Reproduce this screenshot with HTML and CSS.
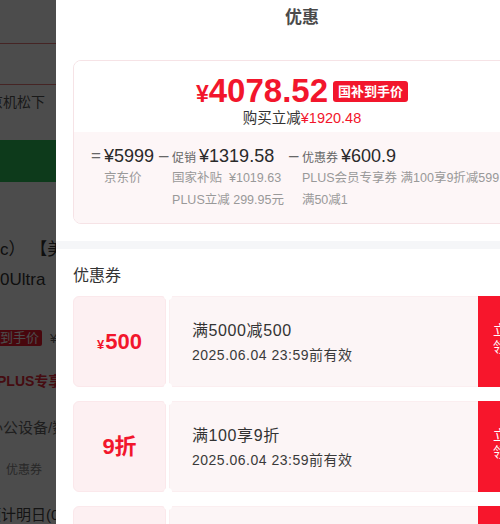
FILE: index.html
```html
<!DOCTYPE html>
<html lang="zh-CN">
<head>
<meta charset="utf-8">
<title>优惠</title>
<link rel="stylesheet" href="styles.css">
</head>
<body>
<div class="page">
  <div class="pg-top"></div>
  <div class="pg-tabs"></div>
  <div class="pg-notice"><span class="shift-10">东京机松下</span></div>
  <div class="pg-green"></div>
  <div class="pg-title">
    <div>c） 【美</div>
    <div>0Ultra</div>
  </div>
  <div class="pg-badge-row"><span class="pg-badge">到手价</span><span class="pg-yen">¥</span></div>
  <div class="pg-plus"><span class="shift-3">PLUS专享</span></div>
  <div class="pg-cat"><span class="shift-12">办公设备/数</span></div>
  <div class="pg-small"><span class="shift-n6">优惠券</span></div>
  <div class="pg-cat pg-ship"><span class="shift-14">预计明日(0</span></div>
</div>
<div class="mask"></div>

<section class="sheet">
  <header class="sheet-head">优惠</header>

  <div class="summary-wrap">
    <div class="summary">
      <div class="summary-main">
        <div class="price-line">
          <span class="price-yen">¥</span><span class="price-num">4078.52</span><span class="price-tag">国补到手价</span>
        </div>
        <div class="price-sub">购买立减<span class="red">¥1920.48</span></div>
      </div>
      <div class="summary-calc">
        <div class="calc-col">
          <span class="op">=</span>
          <div class="calc-body">
            <div class="calc-main"><span class="amt">¥5999</span></div>
            <div class="calc-note">京东价</div>
          </div>
        </div>
        <div class="calc-col">
          <span class="op">–</span>
          <div class="calc-body">
            <div class="calc-main"><span class="lbl">促销</span><span class="amt">¥1319.58</span></div>
            <div class="calc-note">国家补贴&nbsp;&nbsp;¥1019.63</div>
            <div class="calc-note">PLUS立减 299.95元</div>
          </div>
        </div>
        <div class="calc-col">
          <span class="op">–</span>
          <div class="calc-body">
            <div class="calc-main"><span class="lbl">优惠券</span><span class="amt">¥600.9</span></div>
            <div class="calc-note">PLUS会员专享券 满100享9折减599.95元</div>
            <div class="calc-note">满50减1</div>
          </div>
        </div>
      </div>
    </div>
  </div>

  <div class="band"></div>

  <div class="coupons">
    <h2 class="coupons-title">优惠券</h2>
    <div class="coupon">
      <div class="coupon-val"><span class="cv-yen">¥</span>500</div>
      <div class="coupon-info">
        <div class="ci-title">满5000减500</div>
        <div class="ci-date">2025.06.04 23:59前有效</div>
      </div>
      <div class="coupon-btn">立<br>领</div>
    </div>
    <div class="coupon">
      <div class="coupon-val">9折</div>
      <div class="coupon-info">
        <div class="ci-title">满100享9折</div>
        <div class="ci-date">2025.06.04 23:59前有效</div>
      </div>
      <div class="coupon-btn">立<br>领</div>
    </div>
    <div class="coupon">
      <div class="coupon-val"><span class="cv-yen">¥</span>1</div>
      <div class="coupon-info">
        <div class="ci-title">满50减1</div>
        <div class="ci-date">2025.06.04 23:59前有效</div>
      </div>
      <div class="coupon-btn">立<br>领</div>
    </div>
  </div>
</section>
</body>
</html>
```

FILE: styles.css
```css
* { box-sizing: border-box; margin: 0; padding: 0; }

html, body {
  width: 500px;
  height: 524px;
  overflow: hidden;
}

body {
  position: relative;
  background: #fff;
  color: #333;
  font-family: "Liberation Sans", "Noto Sans CJK SC", sans-serif;
}

/* ---------- underlying product page ---------- */
.page {
  width: 500px;
  white-space: nowrap;
  overflow: hidden;
}
.pg-top { height: 44px; border-bottom: 1px solid #e87878; }
.pg-tabs { height: 41px; border-bottom: 1px solid #e87878; }
.pg-notice {
  height: 40px;
  line-height: 34px;
  font-size: 14px;
  color: #555;
}
.pg-green {
  margin-top: 15px;
  height: 42px;
  background: #2cc25a;
}
.pg-title {
  margin-top: 53px;
  font-size: 17px;
  line-height: 30px;
  color: #333;
}
.pg-badge-row {
  margin-top: 35px;
  height: 16px;
  display: flex;
  align-items: center;
  gap: 8px;
}
.pg-badge {
  background: #f0182e;
  color: #fff;
  font-size: 13px;
  line-height: 16px;
  padding: 0 3px 0 0;
  border-radius: 0 2px 2px 0;
}
.pg-yen { font-size: 13px; color: #666; }
.pg-plus {
  margin-top: 25px;
  font-size: 14px;
  line-height: 20px;
  font-weight: bold;
  color: #e8283a;
}
.pg-cat {
  margin-top: 27px;
  font-size: 15px;
  line-height: 20px;
  color: #666;
}
.pg-small {
  margin-top: 24px;
  font-size: 12px;
  line-height: 16px;
  color: #888;
}
.pg-ship { color: #444; }
.shift-10 { margin-left: -25px; }
.shift-3 { margin-left: -3px; }
.shift-12 { margin-left: -12px; }
.shift-14 { margin-left: -14px; }
.shift-n6 { margin-left: 6px; }

.mask {
  position: absolute;
  inset: 0;
  background: rgba(0, 0, 0, 0.7);
}

/* ---------- coupon sheet ---------- */
.sheet {
  position: absolute;
  left: 56px;
  top: 0;
  width: 492px;
  height: 524px;
  background: #fff;
  overflow: hidden;
}

.sheet-head {
  height: 36px;
  line-height: 36px;
  text-align: center;
  font-size: 17px;
  font-weight: bold;
  color: #4a4a4a;
}

.summary-wrap { padding: 24px 17px 17px; }

.summary {
  border: 1px solid #f6e3e6;
  border-radius: 8px;
  overflow: hidden;
}

.summary-main {
  padding: 12px 0 5px;
  text-align: center;
  background: #fff;
}

.price-line {
  height: 36px;
  display: flex;
  justify-content: center;
  align-items: baseline;
  color: #f2162c;
  font-weight: bold;
}
.price-yen { font-size: 23px; }
.price-num { font-size: 33px; line-height: 36px; }
.price-tag {
  align-self: center;
  margin-left: 5px;
  padding: 3px 5px;
  font-size: 13px;
  line-height: 15px;
  color: #fff;
  background: #f2162c;
  border-radius: 3px;
}

.price-sub {
  height: 18px;
  line-height: 18px;
  font-size: 14.5px;
  color: #333;
}
.red { color: #f2162c; }

.summary-calc {
  display: flex;
  gap: 5px;
  padding: 13px 0 12px 17px;
  background: #fdf6f7;
  white-space: nowrap;
}
.calc-col { display: flex; }
.op {
  width: 13px;
  line-height: 22px;
  font-size: 17px;
  color: #666;
}
.calc-main {
  height: 22px;
  line-height: 22px;
  display: flex;
  align-items: baseline;
}
.lbl { font-size: 12px; color: #666; margin-right: 3px; }
.amt { font-size: 18px; color: #2a2a2a; }
.calc-note {
  line-height: 22px;
  font-size: 12.5px;
  color: #999;
}

.band { height: 8px; background: #f5f6f8; }

.coupons {
  padding: 16px 0 0 17px;
}
.coupons-title {
  font-size: 16px;
  line-height: 22px;
  font-weight: normal;
  color: #333;
  margin-bottom: 9px;
}

.coupon {
  position: relative;
  width: 449px;
  height: 91px;
  margin-bottom: 14px;
  display: grid;
  grid-template-columns: 93px 1fr 44px;
  column-gap: 3px;
}
.coupon::before,
.coupon::after {
  content: "";
  position: absolute;
  left: 90.5px;
  width: 8px;
  height: 8px;
  border-radius: 50%;
  background: #fff;
}
.coupon::before { top: -4px; }
.coupon::after { bottom: -4px; }

.coupon-val {
  display: flex;
  align-items: baseline;
  justify-content: center;
  padding-top: 33px;
  background: #fdf0f2;
  border: 1px solid #fbe8eb;
  border-radius: 6px 4px 4px 6px;
  font-size: 22px;
  line-height: 24px;
  font-weight: bold;
  color: #f2162c;
}
.cv-yen { font-size: 13px; margin-right: 1px; }

.coupon-info {
  display: flex;
  flex-direction: column;
  justify-content: center;
  gap: 3px;
  padding: 2px 0 0 22px;
  background: #fcf5f6;
  border: 1px solid #fbeef0;
  border-right: 0;
  border-radius: 4px 0 0 4px;
  margin-right: -3px;
  color: #333;
  white-space: nowrap;
}
.ci-title {
  font-size: 16px;
  line-height: 22px;
  letter-spacing: 0.6px;
}
.ci-date {
  font-size: 14px;
  line-height: 20px;
  letter-spacing: 0.5px;
  color: #3a3a3a;
}

.coupon-btn {
  display: flex;
  align-items: center;
  justify-content: center;
  padding-bottom: 6px;
  text-align: center;
  background: #f7162c;
  color: #fff;
  font-size: 14px;
  line-height: 17px;
}
```
